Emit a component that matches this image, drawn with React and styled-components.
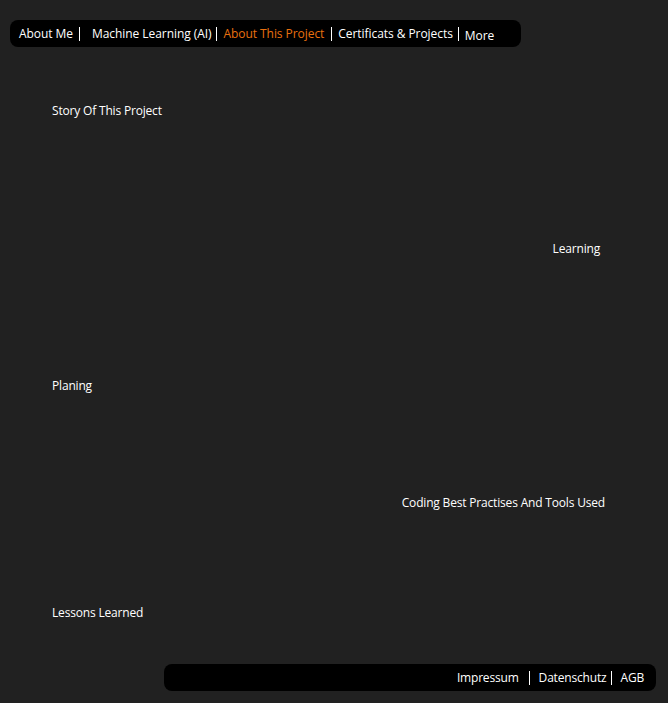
import React from "react";
import styled, { createGlobalStyle } from "styled-components";

const GlobalStyle = createGlobalStyle`
  html, body {
    margin: 0;
    padding: 0;
    background: #212121;
  }
  body {
    font-family: "Open Sans", "Noto Sans", sans-serif;
    color: #fff;
    font-size: 12px;
    letter-spacing: -0.18px;
  }
`;

const Page = styled.div`
  min-height: 703px;
  display: flex;
  flex-direction: column;
  padding: 20px 12px 12px 10px;
  box-sizing: border-box;
`;

const Navbar = styled.nav`
  align-self: flex-start;
  width: 511px;
  height: 27px;
  background: #000;
  border-radius: 8px;
  display: flex;
  align-items: center;
  padding: 0 9px;
  box-sizing: border-box;
  letter-spacing: -0.06px;
`;

const NavItem = styled.a`
  color: ${(p) => (p.active ? "#e8700f" : "#fff")};
  text-decoration: none;
  white-space: nowrap;
  cursor: pointer;
  position: relative;
  top: ${(p) => p.drop || 0}px;
`;

const Sep = styled.span`
  width: 1px;
  height: 14px;
  background: #fff;
  margin: 0 ${(p) => p.r ?? 7}px 0 ${(p) => p.l ?? 7}px;
`;

const Main = styled.main`
  flex: 1;
  display: flex;
  flex-direction: column;
  padding: 0 56px 0 42px;
`;

const Section = styled.section`
  height: ${(p) => p.h}px;
  display: flex;
  align-items: flex-start;
  justify-content: ${(p) => (p.right ? "flex-end" : "flex-start")};
`;

const Title = styled.h2`
  margin: 0 ${(p) => -(p.out || 0)}px 0 0;
  font-size: 12px;
  font-weight: 400;
  line-height: 16px;
`;

const Footer = styled.footer`
  align-self: flex-end;
  width: 492px;
  height: 27px;
  background: #000;
  border-radius: 8px;
  display: flex;
  align-items: center;
  justify-content: flex-end;
  padding: 0 12px;
  box-sizing: border-box;
`;

export default function App() {
  return (
    <>
      <GlobalStyle />
      <Page>
        <Navbar>
          <NavItem>About Me</NavItem>
          <Sep l={6} r={12} />
          <NavItem>Machine Learning (AI)</NavItem>
          <Sep l={4} r={7} />
          <NavItem active>About This Project</NavItem>
          <Sep l={7} r={6} />
          <NavItem>Certificats &amp; Projects</NavItem>
          <Sep l={5} r={6} />
          <NavItem drop={2}>More</NavItem>
        </Navbar>
        <Main>
          <Section h={138} style={{ marginTop: 56 }}>
            <Title>Story Of This Project</Title>
          </Section>
          <Section h={137} right>
            <Title>Learning</Title>
          </Section>
          <Section h={117}>
            <Title>Planing</Title>
          </Section>
          <Section h={110} right>
            <Title out={5}>Coding Best Practises And Tools Used</Title>
          </Section>
          <Section h={40}>
            <Title>Lessons Learned</Title>
          </Section>
        </Main>
        <Footer>
          <NavItem>Impressum</NavItem>
          <Sep l={10} r={9} />
          <NavItem>Datenschutz</NavItem>
          <Sep l={5} r={8} />
          <NavItem>AGB</NavItem>
        </Footer>
      </Page>
    </>
  );
}
